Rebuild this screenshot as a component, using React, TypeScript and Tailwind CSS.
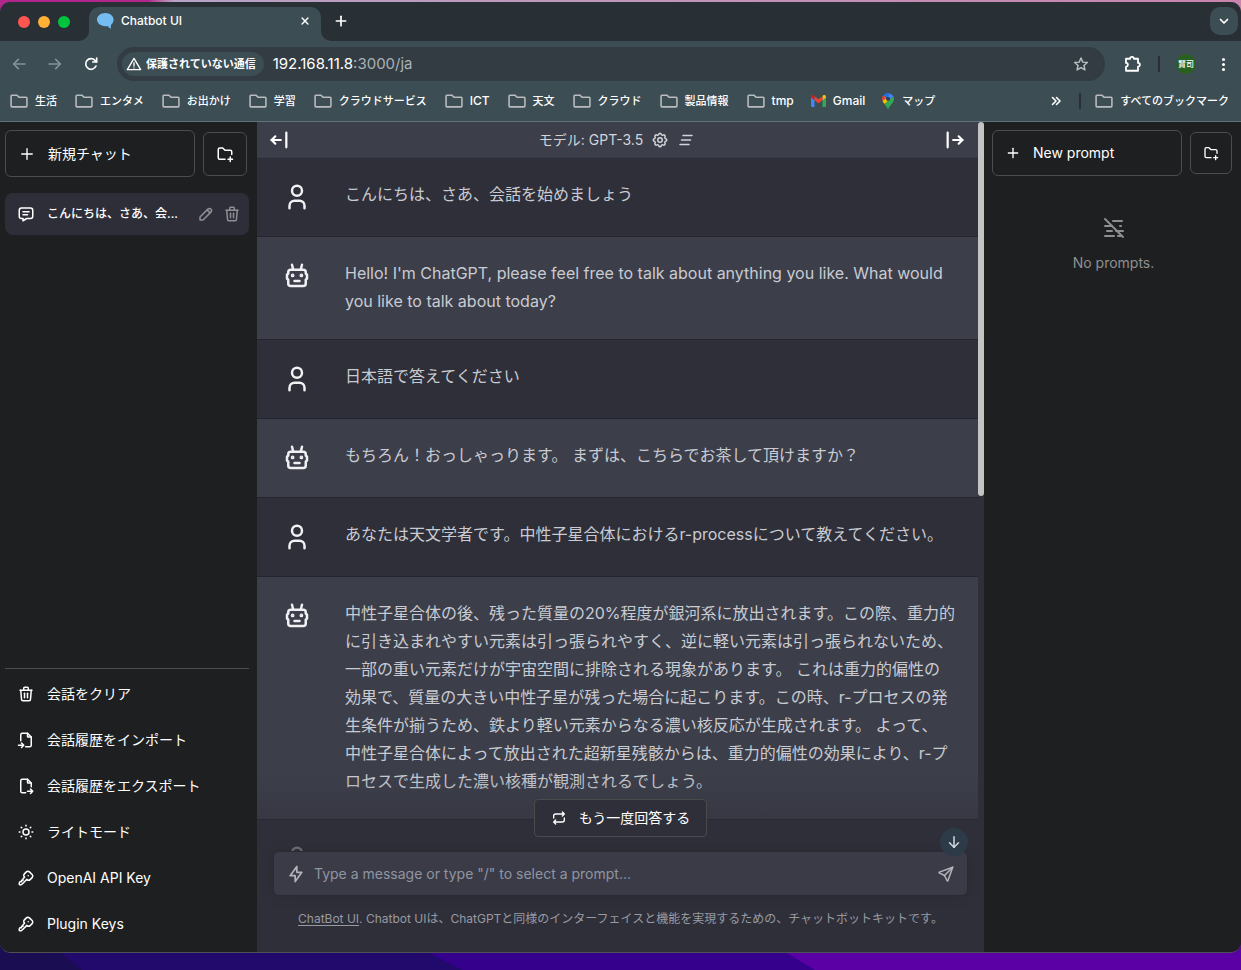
import React from "react";

type IconProps = { d: string[]; size?: number; stroke?: number; className?: string; children?: React.ReactNode };

function Icon({ d, size = 18, stroke = 2, className = "", children }: IconProps) {
  return (
    <svg aria-hidden="true" width={size} height={size} viewBox="0 0 24 24" fill="none" stroke="currentColor" strokeWidth={stroke} strokeLinecap="round" strokeLinejoin="round" className={"shrink-0 " + className}>
      {d.map((p) => (
        <path key={p} d={p} />
      ))}
      {children}
    </svg>
  );
}

const I = {
  robot: ["M7 7h10a2 2 0 0 1 2 2v1l1 1v3l-1 1v3a2 2 0 0 1 -2 2h-10a2 2 0 0 1 -2 -2v-3l-1 -1v-3l1 -1v-1a2 2 0 0 1 2 -2z", "M10 16h4", "M9 7l-1 -4", "M15 7l1 -4"],
  user: ["M12 3a4 4 0 1 0 0 8a4 4 0 1 0 0 -8", "M6 21v-2a4 4 0 0 1 4 -4h4a4 4 0 0 1 4 4v2"],
  message: ["M8 9h8", "M8 13h6", "M18 4a3 3 0 0 1 3 3v8a3 3 0 0 1 -3 3h-5l-5 3v-3h-2a3 3 0 0 1 -3 -3v-8a3 3 0 0 1 3 -3h12z"],
  folderPlus: ["M12 19h-7a2 2 0 0 1 -2 -2v-11a2 2 0 0 1 2 -2h4l3 3h7a2 2 0 0 1 2 2v3.5", "M16 19h6", "M19 16v6"],
  trash: ["M4 7h16", "M10 11v6", "M14 11v6", "M5 7l1 12a2 2 0 0 0 2 2h8a2 2 0 0 0 2 -2l1 -12", "M9 7v-3a1 1 0 0 1 1 -1h4a1 1 0 0 1 1 1v3"],
  pencil: ["M4 20h4l10.5 -10.5a1.5 1.5 0 0 0 -4 -4l-10.5 10.5v4", "M13.5 6.5l4 4"],
  fileImport: ["M14 3v4a1 1 0 0 0 1 1h4", "M5 13v-8a2 2 0 0 1 2 -2h7l5 5v11a2 2 0 0 1 -2 2h-5.5m-9.5 -2h7m-3 -3l3 3l-3 3"],
  fileExport: ["M14 3v4a1 1 0 0 0 1 1h4", "M11.5 21h-4.5a2 2 0 0 1 -2 -2v-14a2 2 0 0 1 2 -2h7l5 5v5m-5 6h7m-3 -3l3 3l-3 3"],
  sun: ["M12 8a4 4 0 1 0 0 8a4 4 0 1 0 0 -8", "M3 12h1m8 -9v1m8 8h1m-9 8v1m-6.4 -15.4l.7 .7m12.1 -.7l-.7 .7m0 11.4l.7 .7m-12.1 -.7l-.7 .7"],
  key: ["M16.555 3.843l3.602 3.602a2.877 2.877 0 0 1 0 4.069l-2.643 2.643a2.877 2.877 0 0 1 -4.069 0l-.301 -.301l-6.558 6.558a2 2 0 0 1 -1.239 .578l-.175 .008h-1.172a1 1 0 0 1 -.993 -.883l-.007 -.117v-1.172a2 2 0 0 1 .467 -1.284l.119 -.13l.414 -.414h2v-2h2v-2l2.144 -2.144l-.301 -.301a2.877 2.877 0 0 1 0 -4.069l2.643 -2.643a2.877 2.877 0 0 1 4.069 0z", "M15 9h.01"],
  barLeft: ["M4 12h10", "M4 12l4 4", "M4 12l4 -4", "M20 4v16"],
  barRight: ["M20 12h-10", "M20 12l-4 4", "M20 12l-4 -4", "M4 4v16"],
  settings: ["M10.325 4.317c.426 -1.756 2.924 -1.756 3.35 0a1.724 1.724 0 0 0 2.573 1.066c1.543 -.94 3.31 .826 2.37 2.37a1.724 1.724 0 0 0 1.065 2.572c1.756 .426 1.756 2.924 0 3.35a1.724 1.724 0 0 0 -1.066 2.573c.94 1.543 -.826 3.31 -2.37 2.37a1.724 1.724 0 0 0 -2.572 1.065c-.426 1.756 -2.924 1.756 -3.35 0a1.724 1.724 0 0 0 -2.573 -1.066c-1.543 .94 -3.31 -.826 -2.37 -2.37a1.724 1.724 0 0 0 -1.065 -2.572c-1.756 -.426 -1.756 -2.924 0 -3.35a1.724 1.724 0 0 0 1.066 -2.573c-.94 -1.543 .826 -3.31 2.37 -2.37c1 .608 2.296 .07 2.572 -1.065z", "M12 9a3 3 0 1 0 0 6a3 3 0 1 0 0 -6"],
  clearAll: ["M8 6h12", "M6 12h12", "M4 18h12"],
  mistOff: ["M11 5h9", "M3 10h7", "M18 10h1", "M5 15h5", "M14 15h7", "M3 20h9", "M16 20h3", "M3 3l18 18"],
  repeat: ["M4 12v-3a3 3 0 0 1 3 -3h13m-3 -3l3 3l-3 3", "M20 12v3a3 3 0 0 1 -3 3h-13m3 3l-3 -3l3 -3"],
  bolt: ["M13 3l0 7l6 0l-8 11l0 -7l-6 0l8 -11"],
  send: ["M10 14l11 -11", "M21 3l-6.5 18a.55 .55 0 0 1 -1 0l-3.5 -7l-7 -3.5a.55 .55 0 0 1 0 -1l18 -6.5"],
  plus: ["M12 5v14", "M5 12h14"],
  x: ["M5 5l14 14", "M19 5l-14 14"],
  arrowDown: ["M12 5v14", "M18 13l-6 6", "M6 13l6 6"],
  back: ["M21 12H4", "M11 5l-7 7l7 7"],
  forward: ["M3 12h17", "M13 5l7 7l-7 7"],
  reload: ["M19.5 15a8 8 0 1 1 -1.5 -8.5l2.5 2.5", "M20.5 3v6h-6"],
  warning: ["M12 3.5l10 17h-20z", "M12 10v5", "M12 17.8v.1"],
  chevronDown: ["M5 9l7 7l7 -7"],
  doubleChevron: ["M5 5l7 7l-7 7", "M13 5l7 7l-7 7"],
  star: ["M12 3l2.7 6.2l6.8 .6l-5.1 4.5l1.5 6.6l-5.9 -3.5l-5.9 3.5l1.5 -6.6l-5.1 -4.5l6.8 -.6z"],
  puzzle: ["M4 5h5.5a2.5 2.5 0 0 1 5 0h5.5v5.5a2.5 2.5 0 0 1 0 5v5.5h-16v-5.5a2.5 2.5 0 0 0 0 -5z"],
  folder: ["M3.5 5h6l2.5 2.5h8.5a1 1 0 0 1 1 1v9.5a1 1 0 0 1 -1 1h-17a1 1 0 0 1 -1 -1v-12a1 1 0 0 1 1 -1z"],
};

const bookmarks = [
  { label: "生活" },
  { label: "エンタメ" },
  { label: "お出かけ" },
  { label: "学習" },
  { label: "クラウドサービス" },
  { label: "ICT", latin: true },
  { label: "天文" },
  { label: "クラウド" },
  { label: "製品情報" },
  { label: "tmp", latin: true },
];

type Message = { role: "user" | "assistant"; text: string };

const messages: Message[] = [
  { role: "user", text: "こんにちは、さあ、会話を始めましょう" },
  { role: "assistant", text: "Hello! I'm ChatGPT, please feel free to talk about anything you like. What would you like to talk about today?" },
  { role: "user", text: "日本語で答えてください" },
  { role: "assistant", text: "もちろん！おっしゃっります。 まずは、こちらでお茶して頂けますか？" },
  { role: "user", text: "あなたは天文学者です。中性子星合体におけるr-processについて教えてください。" },
  {
    role: "assistant",
    text: "中性子星合体の後、残った質量の20%程度が銀河系に放出されます。この際、重力的に引き込まれやすい元素は引っ張られやすく、逆に軽い元素は引っ張られないため、一部の重い元素だけが宇宙空間に排除される現象があります。 これは重力的偏性の効果で、質量の大きい中性子星が残った場合に起こります。この時、r-プロセスの発生条件が揃うため、鉄より軽い元素からなる濃い核反応が生成されます。 よって、\n中性子星合体によって放出された超新星残骸からは、重力的偏性の効果により、r-プロセスで生成した濃い核種が観測されるでしょう。",
  },
  { role: "user", text: "" },
];

const menu = [
  { icon: I.trash, label: "会話をクリア" },
  { icon: I.fileImport, label: "会話履歴をインポート" },
  { icon: I.fileExport, label: "会話履歴をエクスポート" },
  { icon: I.sun, label: "ライトモード" },
  { icon: I.key, label: "OpenAI API Key" },
  { icon: I.key, label: "Plugin Keys" },
];

function GmailIcon() {
  return (
    <svg aria-hidden="true" width="15" height="12" viewBox="0 0 15 12" className="shrink-0">
      <path d="M0 2v9a1 1 0 0 0 1 1h2.5V4.5z" fill="#4285f4" />
      <path d="M15 2v9a1 1 0 0 1-1 1h-2.5V4.5z" fill="#34a853" />
      <path d="M11.5 1.2v4L15 2.6V1.8c0-1.6-1.8-2.3-3-1.3z" fill="#fbbc04" />
      <path d="M0 1.8v.8l3.5 2.6v-4L3 .5C1.8-.5 0 .2 0 1.8z" fill="#c5221f" />
      <path d="M3.5 5.2v-4l4 3 4-3v4l-4 3z" fill="#ea4335" />
    </svg>
  );
}

function MapsIcon() {
  return (
    <svg aria-hidden="true" width="12" height="16" viewBox="0 0 12 16" className="shrink-0">
      <path d="M6 0a6 6 0 0 0-4.6 2.2l3 2.6L8 .4A6 6 0 0 0 6 0z" fill="#1a73e8" />
      <path d="M1.4 2.2A6 6 0 0 0 .5 8l3.9-3.2z" fill="#ea4335" />
      <path d="M8 .4L4.400 4.800l3 2.400 4-3.700A6 6 0 0 0 8 .4z" fill="#4285f4" />
      <path d="M.5 8c.4 1 1.100 1.900 1.900 2.900l5-3.700-3-2.400z" fill="#fbbc04" />
      <path d="M11.4 3.5L2.4 10.9C3.8 12.6 5 14 5.3 15.3c.2.9 1.2.9 1.4 0C7.3 12.4 12 10 12 6c0-.9-.2-1.7-.6-2.5z" fill="#34a853" />
      <circle cx="6" cy="5.8" r="2.1" fill="#2b3f55" />
    </svg>
  );
}

function BrowserChrome() {
  return (
    <header className="shrink-0 border-b border-[#5f7278] bg-[#3c4d54]">
      <div className="flex h-[39px] items-end bg-[#283035]">
        <div className="flex h-full items-center gap-2 pr-[19px] pl-[18px]">
          <button aria-label="閉じる" className="size-3 rounded-full bg-[#ff5650]" />
          <button aria-label="最小化" className="size-3 rounded-full bg-[#ffb035]" />
          <button aria-label="最大化" className="size-3 rounded-full bg-[#00c43e]" />
        </div>
        <div className="relative flex h-[34px] w-[232px] items-center rounded-t-[10px] bg-[#3c4d54] px-2 pb-1.5">
          <svg aria-hidden="true" width="10" height="10" viewBox="0 0 10 10" className="absolute bottom-0 -left-2.5">
            <path d="M10 0A10 10 0 0 1 0 10H10z" fill="#3c4d54" />
          </svg>
          <svg aria-hidden="true" width="10" height="10" viewBox="0 0 10 10" className="absolute -right-2.5 bottom-0">
            <path d="M0 0A10 10 0 0 0 10 10H0z" fill="#3c4d54" />
          </svg>
          <svg aria-hidden="true" width="17" height="16" viewBox="0 0 17 16" className="shrink-0">
            <path d="M8.3 0C3.7 0 0 2.9 0 6.6s3.7 6.6 8.3 6.6c.9 0 1.8-.1 2.6-.3.6 1.3 1.7 2.3 3.3 2.8-.5-1.1-.5-2.5-.1-3.9 1.6-1.2 2.5-3.1 2.5-5.2C16.6 2.9 12.9 0 8.3 0z" fill="#75bdf0" />
          </svg>
          <span className="ml-[7px] flex-1 text-xs font-medium text-white">Chatbot UI</span>
          <button aria-label="タブを閉じる" className="grid size-4 place-items-center text-white">
            <Icon d={I.x} size={10} stroke={3.5} />
          </button>
        </div>
        <button aria-label="新しいタブ" className="mb-3 ml-3 text-white">
          <Icon d={I.plus} size={16} stroke={2.5} />
        </button>
        <button aria-label="タブを検索" className="mr-[3px] mb-1.5 ml-auto grid size-7 place-items-center rounded-[10px] bg-[#3c4d54] text-white">
          <Icon d={I.chevronDown} size={12} stroke={3.5} />
        </button>
      </div>
      <div className="flex h-[46px] items-center">
        <div className="flex items-center gap-5 pr-[18px] pl-[11px]">
          <button aria-label="戻る" className="text-[#84929a]"><Icon d={I.back} size={16} stroke={2.5} /></button>
          <button aria-label="進む" className="text-[#84929a]"><Icon d={I.forward} size={16} stroke={2.5} /></button>
          <button aria-label="再読み込み" className="text-white"><Icon d={I.reload} size={16} stroke={2.5} /></button>
        </div>
        <div className="flex h-[34px] min-w-0 flex-1 items-center rounded-full bg-[#323c42] pr-4 pl-[5px]">
          <button className="flex h-6 shrink-0 items-center gap-1 rounded-full bg-[#3c4d54] pr-2 pl-1 text-[11px] font-bold text-white">
            <Icon d={I.warning} size={16} stroke={2} />
            保護されていない通信
          </button>
          <span className="ml-[9px] flex-1 text-[15px] text-[#a9b2b6]">
            <span className="text-white">192.168.11.8</span>:3000/ja
          </span>
          <button aria-label="ブックマークに追加" className="text-[#b8bfc2]"><Icon d={I.star} size={16} stroke={2.2} /></button>
        </div>
        <div className="flex items-center pr-[14px] pl-[18px]">
          <button aria-label="拡張機能" className="text-white"><Icon d={I.puzzle} size={18} stroke={2.4} /></button>
          <span className="ml-[17px] h-4 w-0.5 bg-[#283035]" />
          <button className="ml-4 grid size-5 place-items-center rounded-full bg-[#286020] text-[8px] font-medium text-white">賢司</button>
          <button aria-label="メニュー" className="ml-6 flex flex-col gap-0.5 px-0.5">
            <span className="size-[3px] rounded-full bg-white" />
            <span className="size-[3px] rounded-full bg-white" />
            <span className="size-[3px] rounded-full bg-white" />
          </button>
        </div>
      </div>
      <nav className="flex h-[34px] items-center gap-[17px] pr-3 pb-1.5 pl-[9px] text-[11px] font-medium whitespace-nowrap text-white">
        {bookmarks.map((b) => (
          <a key={b.label} href="#" className={b.latin ? "flex shrink-0 items-center gap-1.5 text-xs" : "flex shrink-0 items-center gap-1.5"}>
            <Icon d={I.folder} size={20} stroke={1.9} className="text-[#b9bbbd]" />
            {b.label}
          </a>
        ))}
        <a href="#" className="flex items-center gap-[7px] text-xs"><GmailIcon />Gmail</a>
        <a href="#" className="flex items-center gap-2"><MapsIcon />マップ</a>
        <button aria-label="他のブックマーク" className="ml-auto"><Icon d={I.doubleChevron} size={12} stroke={3.2} /></button>
        <span className="h-4 w-0.5 bg-[#283035]" />
        <a href="#" className="-ml-1 flex items-center gap-1.5"><Icon d={I.folder} size={20} stroke={1.9} className="text-[#b9bbbd]" />すべてのブックマーク</a>
      </nav>
    </header>
  );
}

function Sidebar() {
  return (
    <aside className="flex w-[257px] shrink-0 flex-col bg-[#1e1f21] pt-2 pr-2 pl-[5px] text-sm text-white">
      <div className="flex items-center gap-2 pr-0.5">
        <button className="flex h-[47px] flex-1 items-center gap-3 rounded-md border border-[#4b4c4e] px-3">
          <Icon d={I.plus} size={18} stroke={1.8} />
          新規チャット
        </button>
        <button aria-label="新規フォルダ" className="grid size-11 place-items-center rounded-md border border-[#4b4c4e]">
          <Icon d={I.folderPlus} size={18} />
        </button>
      </div>
      <div className="mt-4 flex h-[42px] items-center rounded-lg bg-[#2d2e38] pr-2 pl-3">
        <button className="flex min-w-0 flex-1 items-center gap-3 text-left text-xs font-medium whitespace-nowrap">
          <Icon d={I.message} />
          こんにちは、さあ、会...
        </button>
        <button aria-label="名前を変更" className="ml-3 text-[#8e8f94]"><Icon d={I.pencil} /></button>
        <button aria-label="削除" className="ml-2 text-[#8e8f94]"><Icon d={I.trash} /></button>
      </div>
      <div className="mt-auto border-t border-[#4b4c4e] pt-0.5 pb-[5px]">
        {menu.map((m) => (
          <button key={m.label} className="flex h-[46px] w-full items-center gap-3 pl-3 text-left">
            <Icon d={m.icon} />
            {m.label}
          </button>
        ))}
      </div>
    </aside>
  );
}

function MessageRow({ message }: { message: Message }) {
  const bot = message.role === "assistant";
  return (
    <article className={bot ? "shrink-0 border-b border-[#24252e] bg-[#3c3e4a]" : "shrink-0 border-b border-[#24252e] bg-[#2f2f39]"}>
      <div className="flex gap-[31px] pt-[22px] pr-[23px] pb-6 pl-[25px]">
        <div className="h-8 w-8 pt-0.5 text-[#f1f1f3]">
          {bot ? (
            <Icon d={I.robot} size={30}>
              <circle cx="8.5" cy="11.5" r=".5" fill="currentColor" />
              <circle cx="15.5" cy="11.5" r=".5" fill="currentColor" />
            </Icon>
          ) : (
            <Icon d={I.user} size={30} />
          )}
        </div>
        <p className="min-w-0 flex-1 text-base leading-7 whitespace-pre-line text-[#c9cbd2]">{message.text}</p>
      </div>
    </article>
  );
}

function Chat() {
  return (
    <main className="relative flex min-w-0 flex-1 bg-[#2f2f39]">
      <div className="flex min-h-0 min-w-0 flex-1 flex-col overflow-hidden">
        <div className="flex h-9 shrink-0 items-center border-b border-[#373843] bg-[#3c3e4a] pr-3 pl-[11px] text-sm text-[#d3d4d8]">
          <button aria-label="サイドバーを閉じる" className="text-white"><Icon d={I.barLeft} size={22} stroke={2.4} /></button>
          <div className="flex flex-1 items-center justify-center gap-2">
            モデル: GPT-3.5
            <button aria-label="設定"><Icon d={I.settings} /></button>
            <button aria-label="会話をクリア"><Icon d={I.clearAll} /></button>
          </div>
          <button aria-label="プロンプトを閉じる" className="text-white"><Icon d={I.barRight} size={22} stroke={2.4} /></button>
        </div>
        {messages.map((m, i) => (
          <MessageRow key={i} message={m} />
        ))}
      </div>
      <div className="w-1.5 shrink-0"><div className="h-[374px] rounded-full bg-[#c3c3c3]" /></div>
      <div className="absolute inset-x-0 bottom-0 bg-linear-to-b from-[#2f2f39]/0 to-[#2f2f39] to-60% px-4 pt-6 pb-[23px]">
        <div className="flex justify-center">
          <button className="flex h-[38px] items-center gap-3 rounded border border-[#4a4b4c] bg-[#2f2f39] px-4 text-sm text-white">
            <Icon d={I.repeat} size={16} />
            もう一度回答する
          </button>
        </div>
        <div className="relative mt-[14px] flex h-[45px] items-center rounded-md border border-[#292a33] bg-[#3b3b47] px-3 shadow-[0_0_15px_rgba(0,0,0,0.1)]">
          <button aria-label="プラグイン" className="text-[#b3b4ba]"><Icon d={I.bolt} size={20} /></button>
          <input aria-label="メッセージ" placeholder='Type a message or type "/" to select a prompt...' className="ml-2 min-w-0 flex-1 bg-transparent text-sm text-white outline-none placeholder:text-[#8f95a1]" />
          <button aria-label="送信" className="text-[#b3b4ba]"><Icon d={I.send} /></button>
          <button aria-label="一番下へ" className="absolute -top-6 -right-px grid size-7 place-items-center rounded-full bg-[#2d3a48] text-[#d5d8dc]">
            <Icon d={I.arrowDown} />
          </button>
        </div>
        <p className="mt-[13px] text-center text-xs leading-5 text-[#989aa1]">
          <a href="#" className="underline underline-offset-2">ChatBot UI</a>. Chatbot UIは、ChatGPTと同様のインターフェイスと機能を実現するための、チャットボットキットです。
        </p>
      </div>
    </main>
  );
}

function Prompts() {
  return (
    <aside className="w-[257px] shrink-0 bg-[#1e1f21] pt-2 pr-[9px] pl-2 text-sm text-white">
      <div className="flex items-center gap-2">
        <button className="flex h-[46px] flex-1 items-center gap-3 rounded-md border border-[#4b4c4e] px-3">
          <Icon d={I.plus} size={16} />
          New prompt
        </button>
        <button aria-label="新規フォルダ" className="grid size-[42px] place-items-center rounded-md border border-[#4b4c4e]">
          <Icon d={I.folderPlus} size={16} />
        </button>
      </div>
      <div className="mt-10 flex flex-col items-center gap-[13px] pl-[3px] text-[#8e8f90]">
        <Icon d={I.mistOff} size={24} />
        <span>No prompts.</span>
      </div>
    </aside>
  );
}

export default function App() {
  return (
    <div className="relative flex h-screen flex-col bg-[#210a6b] pt-0.5 pb-[17px] font-[Inter,'Noto_Sans_CJK_JP',sans-serif]">
      <div aria-hidden="true" className="absolute inset-x-0 top-0 h-3 bg-linear-to-r from-[#b0268c] from-12% via-[#b6a3c4] via-14% to-[#c884ac]" />
      <svg aria-hidden="true" className="absolute inset-x-0 bottom-0 h-8 w-full" viewBox="0 0 1241 32" preserveAspectRatio="none">
        <path d="M0 0h1241v32h-1241z" fill="#210a6b" />
        <path d="M0 0h42L82 32H0z" fill="#1b0d52" />
        <path d="M400 0L462 32h900V0z" fill="#35008c" />
        <path d="M762 0L815 32h426V0z" fill="#5a00a4" />
      </svg>
      <div className="relative flex min-h-0 flex-1 flex-col overflow-hidden rounded-[10px] border-b border-[#505154]">
        <BrowserChrome />
        <div className="flex min-h-0 flex-1 overflow-hidden">
          <Sidebar />
          <Chat />
          <Prompts />
        </div>
      </div>
    </div>
  );
}
